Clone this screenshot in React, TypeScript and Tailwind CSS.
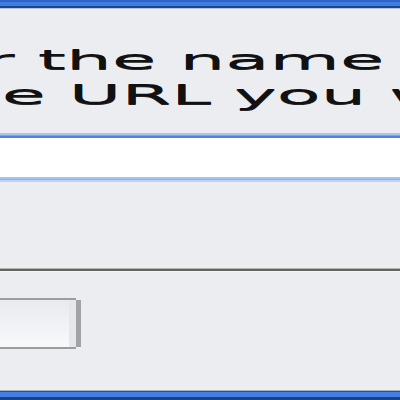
import React from 'react';

const textFont = { fontFamily: '"DejaVu Sans", Verdana, sans-serif' };

export default function App() {
  return (
    <div className="w-[400px] h-[400px] overflow-hidden bg-[#ecedf1] flex flex-col">
      {/* window title bar edge */}
      <div className="h-[2px] bg-[#2f62c6]" />
      <div className="h-[4px] bg-[#3d7ee2]" />
      <div className="h-[2px] bg-[#1d4494]" />
      <div className="h-px bg-[#bcc3cf]" />

      {/* prompt text */}
      <div
        className="mt-[33px] text-[27px] text-[#111] [text-shadow:0_1px_0_#222]"
        style={textFont}
      >
        <div className="h-[35px] leading-[35px] whitespace-nowrap origin-left scale-x-[2.68]">
          <span className="ml-[-67px]">Enter the name of the site</span>
        </div>
        <div className="h-[35px] leading-[35px] whitespace-nowrap origin-left scale-x-[2.66]">
          <span className="ml-[-27px]">the URL you want to visit</span>
        </div>
      </div>

      {/* input field */}
      <div className="mt-[21px] flex flex-col">
        <div className="h-[2px] bg-[#a8c3f6]" />
        <div className="h-[1px] bg-[#7ea3ec]" />
        <div className="h-[2px] bg-[#5483dc]" />
        <div className="h-[39px] bg-white" />
        <div className="h-[2px] bg-[#a6c3f8]" />
        <div className="h-[1px] bg-[#88adf1]" />
        <div className="h-[2px] bg-[#bfd3f5]" />
      </div>

      {/* separator */}
      <div className="mt-[86px] flex flex-col">
        <div className="h-px bg-[#b4b4b4]" />
        <div className="h-[2px] bg-[#636363]" />
        <div className="h-px bg-[#f6f6f8]" />
      </div>

      {/* button */}
      <div className="mt-[26px] flex h-[51px]">
        <div className="w-[76px] flex border-y-2 border-[#9c9c9c] bg-gradient-to-b from-[#e8eaee] to-[#f8f9fb]">
          <div className="flex-1" />
          <div className="w-[7px] bg-[#e4e7ec]" />
        </div>
        <div className="w-[5px] my-[2px] bg-[#a2a2a2]" />
      </div>

      {/* bottom window edge */}
      <div className="mt-auto flex flex-col">
        <div className="h-px bg-[#a9b3c4]" />
        <div className="h-px bg-[#2a4f98]" />
        <div className="h-[5px] bg-[#3f7fe6]" />
        <div className="h-[3px] bg-[#1e3f82]" />
      </div>
    </div>
  );
}
